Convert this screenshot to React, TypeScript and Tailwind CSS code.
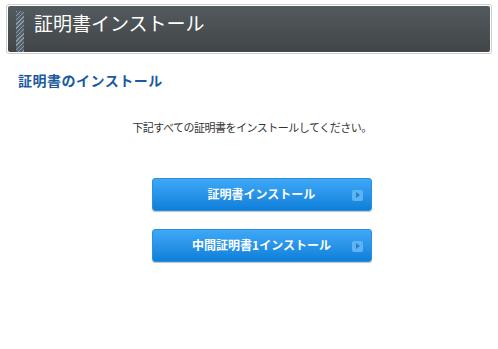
import React from "react";

const font = { fontFamily: '"Noto Sans CJK JP", "Noto Sans", sans-serif' };

const InstallButton = ({ label }: { label: string }) => (
  <button className="relative flex h-[33px] w-[220px] items-center justify-center rounded-[3px] border border-[#2a8fe0] bg-gradient-to-b from-[#3ea8f7] to-[#0b7fd9] text-[12px] font-bold text-white shadow-[0_1px_1px_rgba(0,0,0,0.25)]">
    <span>{label}</span>
    <span className="absolute right-[8px] top-[11px] flex h-[11px] w-[11px] items-center justify-center rounded-[2px] bg-[#5db4f2]">
      <span className="ml-px h-0 w-0 border-y-[3px] border-l-[4px] border-y-transparent border-l-[#2a7ccc]" />
    </span>
  </button>
);

export default function App() {
  return (
    <div className="min-h-[349px] w-[498px] bg-white px-[6px] pt-[4px]" style={font}>
      <div className="rounded-[3px] border border-[#c9ced3] bg-white p-px">
        <div className="flex h-[46px] rounded-[2px] bg-gradient-to-b from-[#535b5e] to-[#414547]">
          <div className="ml-[8px] mt-[5px] w-[8px] bg-[repeating-linear-gradient(135deg,#8a9aa6_0px,#8a9aa6_1px,#56606a_1px,#56606a_3px)]" />
          <h1 className="ml-[10px] mt-[3px] text-[19px] leading-[28px] text-white">証明書インストール</h1>
        </div>
      </div>
      <h2 className="ml-[12px] mt-[16px] text-[14px] font-bold tracking-[0.5px] text-[#1b5a9e]">証明書のインストール</h2>
      <p className="mt-[28px] pl-[6px] text-center text-[11px] tracking-[-0.5px] text-[#333]">
        下記すべての証明書をインストールしてください。
      </p>
      <div className="mt-[42px] flex flex-col items-center gap-[18px] pl-[25px]">
        <InstallButton label="証明書インストール" />
        <InstallButton label="中間証明書1インストール" />
      </div>
    </div>
  );
}
